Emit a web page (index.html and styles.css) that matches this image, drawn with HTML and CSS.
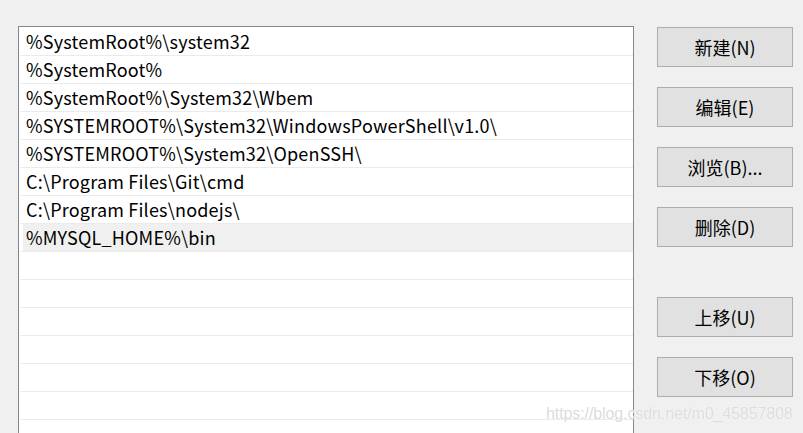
FILE: index.html
```html
<!DOCTYPE html>
<html lang="zh-CN">
<head>
<meta charset="utf-8">
<title>编辑环境变量</title>
<link rel="stylesheet" href="styles.css">
</head>
<body>
<div class="dialog">
  <div class="list">
    <div class="row"><div class="cell">%SystemRoot%\system32</div></div>
    <div class="row"><div class="cell">%SystemRoot%</div></div>
    <div class="row"><div class="cell">%SystemRoot%\System32\Wbem</div></div>
    <div class="row"><div class="cell">%SYSTEMROOT%\System32\WindowsPowerShell\v1.0\</div></div>
    <div class="row"><div class="cell">%SYSTEMROOT%\System32\OpenSSH\</div></div>
    <div class="row"><div class="cell">C:\Program Files\Git\cmd</div></div>
    <div class="row"><div class="cell">C:\Program Files\nodejs\</div></div>
    <div class="row"><div class="cell sel">%MYSQL_HOME%\bin</div></div>
    <div class="row"><div class="cell"></div></div>
    <div class="row"><div class="cell"></div></div>
    <div class="row"><div class="cell"></div></div>
    <div class="row"><div class="cell"></div></div>
    <div class="row"><div class="cell"></div></div>
    <div class="row"><div class="cell"></div></div>
  </div>
  <div class="buttons">
    <button class="btn">新建(N)</button>
    <button class="btn">编辑(E)</button>
    <button class="btn">浏览(B)...</button>
    <button class="btn">删除(D)</button>
    <button class="btn spaced">上移(U)</button>
    <button class="btn">下移(O)</button>
  </div>
</div>
<div class="watermark">https://blog.csdn.net/m0_45857808</div>
</body>
</html>
```

FILE: styles.css
```css
html, body {
  margin: 0;
  padding: 0;
  background: #f0f0f0;
  overflow: hidden;
  height: 433px;
}

body {
  position: relative;
  font-family: "Noto Sans CJK SC", "Noto Sans", sans-serif;
  color: #000;
}

.dialog {
  display: flex;
  align-items: flex-start;
  padding: 26px 0 0 18px;
}

.list {
  box-sizing: border-box;
  width: 616px;
  height: 407px;
  border: 1px solid #828790;
  border-bottom: none;
  background: #fff;
  padding: 1px 0 0 1px;
  overflow: hidden;
}

.row {
  height: 28px;
  box-sizing: border-box;
  border-bottom: 1px solid #ebebeb;
}

.cell {
  height: 27px;
  margin-left: 3px;
  padding-left: 3px;
  font-size: 18px;
  line-height: 27px;
  letter-spacing: 0.2px;
  white-space: nowrap;
}

.cell.sel {
  background: #f0f0f0;
}

.buttons {
  display: flex;
  flex-direction: column;
  gap: 20px;
  margin-left: 23px;
  padding-top: 1px;
}

.btn {
  box-sizing: border-box;
  width: 136px;
  height: 40px;
  border: 1px solid #adadad;
  background: #e1e1e1;
  font-family: "Noto Sans CJK SC", "Noto Sans", sans-serif;
  font-size: 18px;
  color: #000;
  padding: 0;
  margin: 0;
}

.btn.spaced {
  margin-top: 30px;
}

.watermark {
  position: absolute;
  left: 546px;
  top: 404px;
  font-family: "Liberation Sans", Arial, sans-serif;
  font-size: 16px;
  line-height: 20px;
  color: rgba(215, 215, 215, 0.9);
  text-shadow: 0 0 1px #fff, 0 0 1px #fff;
  white-space: nowrap;
  letter-spacing: -0.1px;
}
```
